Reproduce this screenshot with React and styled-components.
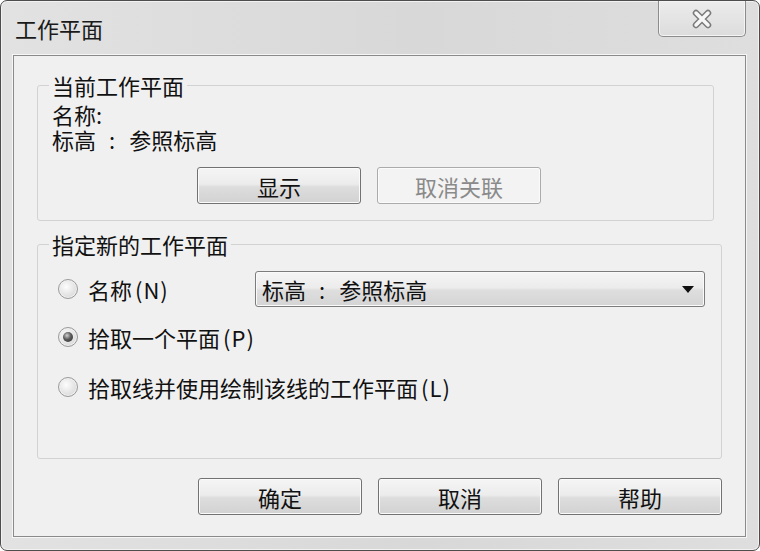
import React from 'react';
import styled, { createGlobalStyle } from 'styled-components';

const GlobalStyle = createGlobalStyle`
  html, body {
    margin: 0;
    padding: 0;
    background: #fff;
  }
  body {
    font-family: "Noto Sans CJK SC", "Liberation Sans", sans-serif;
  }
  #root {
    width: 760px;
    height: 551px;
  }
`;

const Window = styled.div`
  width: 760px;
  height: 551px;
  box-sizing: border-box;
  border: 1px solid #4d4d4d;
  border-radius: 7px;
  background: linear-gradient(to right, #e2e2e2, #d8d8d8 55%, #dedede);
  box-shadow: inset 0 0 0 1px #f2f2f2;
  display: flex;
  flex-direction: column;
  padding: 0 13px 13px 12px;
  overflow: hidden;
`;

const TitleBar = styled.div`
  height: 54px;
  display: flex;
  align-items: center;
  justify-content: space-between;
`;

const Title = styled.div`
  padding-left: 2px;
  font-size: 22px;
  color: #1a1a1a;
`;

const CloseButton = styled.div`
  align-self: flex-start;
  width: 88px;
  height: 36px;
  box-sizing: border-box;
  border: 1px solid #8c8c8c;
  border-top: none;
  border-radius: 0 0 5px 5px;
  background: linear-gradient(to bottom, #ececec, #dcdcdc);
  box-shadow: inset 0 0 0 1px #f4f4f4;
  display: flex;
  align-items: center;
  justify-content: center;
`;

const Client = styled.div`
  flex: 1;
  border: 1px solid #8a8a8a;
  background: #f0f0f0;
  box-shadow: 0 0 0 1px #f6f6f6;
  padding: 16px 23px 0 23px;
  display: flex;
  flex-direction: column;
  color: #111;
  font-size: 22px;
`;

const Group = styled.fieldset`
  margin: ${p => p.$top || 0}px 0 0 0;
  min-width: 0;
  width: ${p => (p.$width ? `${p.$width}px` : 'auto')};
  box-sizing: border-box;
  border: 1px solid #d2d2d2;
  border-radius: 3px;
  padding: ${p => p.$pad};
`;

const Legend = styled.legend`
  padding: 0 3px;
  margin-left: -3px;
  font-size: 22px;
  line-height: 26px;
  color: #111;
`;

const InfoLine = styled.div`
  height: 25px;
  line-height: 25px;
  white-space: nowrap;
`;

const Sep = styled.span`
  padding: 0 14px 0 13px;
`;

const ButtonRow = styled.div`
  display: flex;
  gap: 16px;
  justify-content: ${p => p.$align || 'flex-start'};
  margin: ${p => p.$margin};
`;

const Button = styled.button`
  width: 164px;
  height: 37px;
  box-sizing: border-box;
  padding: 0;
  border: 1px solid #727272;
  border-radius: 3px;
  background: linear-gradient(to bottom, #f5f5f5 0%, #ececec 46%, #dddddd 54%, #d2d2d2 100%);
  box-shadow: inset 0 0 0 1px #fbfbfb;
  font-family: inherit;
  font-size: 22px;
  color: #111;

  &:disabled {
    border-color: #ababab;
    background: #f3f3f3;
    color: #8a8a8a;
  }
`;

const OptionRow = styled.div`
  display: flex;
  align-items: center;
  height: 36px;
  padding-left: 6px;
  margin-top: ${p => p.$gap || 0}px;
`;

const RadioOption = styled.label`
  display: flex;
  align-items: center;
  gap: 10px;
  width: ${p => (p.$width ? `${p.$width}px` : 'auto')};
  white-space: nowrap;
`;

const RadioDot = styled.span`
  position: relative;
  width: 20px;
  height: 20px;
  box-sizing: border-box;
  border-radius: 50%;
  border: 1px solid #9a9a9a;
  background: radial-gradient(circle at 40% 38%, #fdfdfd 0%, #e8e8e8 45%, #cfcfcf 100%);
  box-shadow: inset 0 0 0 1px #f2f2f2;
  flex-shrink: 0;

  &::after {
    content: '';
    display: ${p => (p.$checked ? 'block' : 'none')};
    position: absolute;
    left: 4px;
    top: 4px;
    width: 10px;
    height: 10px;
    border-radius: 50%;
    background: radial-gradient(circle at 40% 35%, #d0d0d0 0%, #5a5a5a 45%, #2c2c2c 100%);
  }
`;

const Hotkey = styled.span`
  margin-left: 3px;
  letter-spacing: 1px;
`;

const Select = styled.div`
  width: 450px;
  height: 36px;
  box-sizing: border-box;
  border: 1px solid #7c7c7c;
  border-radius: 3px;
  background: linear-gradient(to bottom, #f5f5f5 0%, #ececec 46%, #dedede 54%, #d4d4d4 100%);
  box-shadow: inset 0 0 0 1px #fafafa;
  display: flex;
  align-items: center;
  justify-content: space-between;
  padding: 0 10px 0 6px;
  white-space: nowrap;
`;

const Caret = styled.span`
  width: 0;
  height: 0;
  border-left: 6px solid transparent;
  border-right: 6px solid transparent;
  border-top: 7px solid #111;
`;

const CloseGlyph = () => (
  <svg width="24" height="20" viewBox="0 0 24 20">
    <path d="M6 4 L18 16 M18 4 L6 16" stroke="#7a7a7a" strokeWidth="6.5" strokeLinecap="round" fill="none" />
    <path d="M6 4 L18 16 M18 4 L6 16" stroke="#f6f6f6" strokeWidth="3.5" strokeLinecap="round" fill="none" />
  </svg>
);

export default function App() {
  return (
    <>
      <GlobalStyle />
      <Window>
        <TitleBar>
          <Title>工作平面</Title>
          <CloseButton>
            <CloseGlyph />
          </CloseButton>
        </TitleBar>

        <Client>
          <Group $width={677} $pad="4px 14px 16px 14px">
            <Legend>当前工作平面</Legend>
            <InfoLine>名称:</InfoLine>
            <InfoLine>标高<Sep>:</Sep>参照标高</InfoLine>
            <ButtonRow $margin="15px 0 0 145px">
              <Button>显示</Button>
              <Button disabled>取消关联</Button>
            </ButtonRow>
          </Group>

          <Group $top={10} $pad="14px 14px 53px 14px">
            <Legend>指定新的工作平面</Legend>
            <OptionRow>
              <RadioOption $width={197}>
                <RadioDot />
                <span>名称<Hotkey>(N)</Hotkey></span>
              </RadioOption>
              <Select>
                <span>标高<Sep>:</Sep>参照标高</span>
                <Caret />
              </Select>
            </OptionRow>
            <OptionRow $gap={12}>
              <RadioOption>
                <RadioDot $checked />
                <span>拾取一个平面<Hotkey>(P)</Hotkey></span>
              </RadioOption>
            </OptionRow>
            <OptionRow $gap={14}>
              <RadioOption>
                <RadioDot />
                <span>拾取线并使用绘制该线的工作平面<Hotkey>(L)</Hotkey></span>
              </RadioOption>
            </OptionRow>
          </Group>

          <ButtonRow $align="flex-end" $margin="19px 0 0 0">
            <Button>确定</Button>
            <Button>取消</Button>
            <Button>帮助</Button>
          </ButtonRow>
        </Client>
      </Window>
    </>
  );
}
